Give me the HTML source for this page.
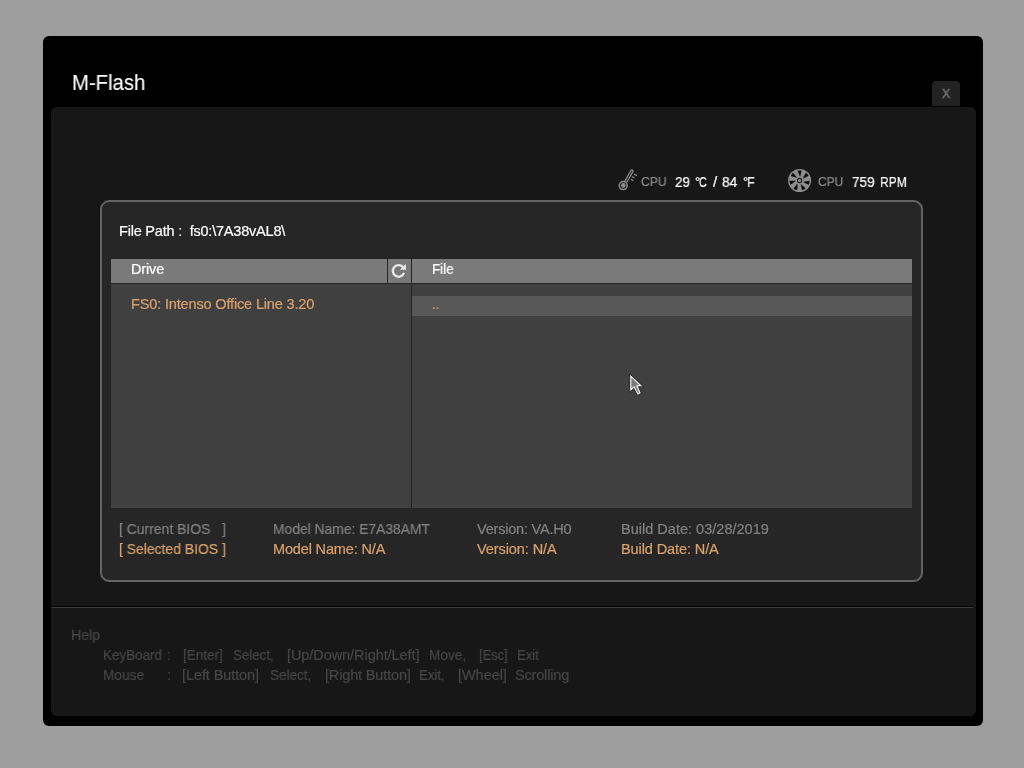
<!DOCTYPE html>
<html><head><meta charset="utf-8"><style>
html,body{margin:0;padding:0;}
body{width:1024px;height:768px;background:#9e9e9e;position:relative;overflow:hidden;font-family:"Liberation Sans", sans-serif;}
.a{position:absolute;}
.t{position:absolute;white-space:pre;will-change:transform;-webkit-text-stroke:0.2px currentColor;}
</style></head><body>
<div class="a" style="left:43px;top:36px;width:940px;height:690px;background:#000;border-radius:6px;"></div>
<div class="a" style="left:51px;top:107px;width:925px;height:609px;background:#171717;border-radius:6px;"></div>
<div class="a" style="left:932px;top:81px;width:28px;height:25px;background:#222222;border-radius:4px 4px 0 0;"></div>
<svg class="a" style="left:0;top:0;" width="1024" height="768"><path d="M109,201 L914,201 L917.6,201.8 L921.2,205.4 L922,209 L922,573 L921.2,576.6 L917.6,580.2 L914,581 L109,581 L105.4,580.2 L101.8,576.6 L101,573 L101,209 L101.8,205.4 L105.4,201.8 Z" fill="#262626" stroke="#646464" stroke-width="2"/></svg>
<div class="a" style="left:111px;top:259px;width:276px;height:24px;background:#7a7a7a;"></div>
<div class="a" style="left:388px;top:259px;width:23px;height:24px;background:#787878;"></div>
<div class="a" style="left:412px;top:259px;width:500px;height:24px;background:#7a7a7a;"></div>
<div class="a" style="left:111px;top:284px;width:300px;height:224px;background:#404040;"></div>
<div class="a" style="left:412px;top:284px;width:500px;height:224px;background:#404040;"></div>
<div class="a" style="left:412px;top:296px;width:500px;height:20px;background:#585858;"></div>
<div class="a" style="left:51px;top:606px;width:922px;height:1px;background:#000;"></div>
<div class="a" style="left:51px;top:607px;width:922px;height:1px;background:#3c3c3c;"></div>
<div class="t" style="left:71.80px;top:72.50px;font-size:21.5px;line-height:21.5px;color:#ffffff;transform:scaleX(0.9433);transform-origin:0.00px 0;-webkit-text-stroke:0.1px #fff;">M-Flash</div>
<div class="t" style="left:941.60px;top:87.10px;font-size:13px;line-height:13px;color:#6c6c6c;transform:scaleX(0.9425);transform-origin:0.00px 0;-webkit-text-stroke:0.6px currentColor;">X</div>
<div class="t" style="left:640.60px;top:176.22px;font-size:12.5px;line-height:12.5px;color:#8e8e8e;transform:scaleX(0.9735);transform-origin:0.00px 0;">CPU</div>
<div class="t" style="left:675.10px;top:173.60px;font-size:15px;line-height:15px;color:#ffffff;transform:scaleX(0.8982);transform-origin:0.00px 0;">29</div>
<div class="t" style="left:695.20px;top:174.60px;font-size:13px;line-height:13px;color:#ffffff;">°</div>
<div class="t" style="left:699.30px;top:173.78px;font-size:15.5px;line-height:15.5px;color:#ffffff;transform:scaleX(0.6964);transform-origin:0.00px 0;">C</div>
<div class="t" style="left:712.80px;top:173.60px;font-size:15px;line-height:15px;color:#ffffff;">/</div>
<div class="t" style="left:722.30px;top:173.60px;font-size:15px;line-height:15px;color:#ffffff;transform:scaleX(0.9162);transform-origin:0.00px 0;">84</div>
<div class="t" style="left:742.80px;top:174.60px;font-size:13px;line-height:13px;color:#ffffff;">°</div>
<div class="t" style="left:746.90px;top:173.78px;font-size:15.5px;line-height:15.5px;color:#ffffff;transform:scaleX(0.8211);transform-origin:0.00px 0;">F</div>
<div class="t" style="left:817.80px;top:176.22px;font-size:12.5px;line-height:12.5px;color:#8e8e8e;transform:scaleX(0.9583);transform-origin:0.00px 0;">CPU</div>
<div class="t" style="left:852.40px;top:174.40px;font-size:15px;line-height:15px;color:#ffffff;transform:scaleX(0.9040);transform-origin:0.00px 0;">759</div>
<div class="t" style="left:880.40px;top:174.40px;font-size:15px;line-height:15px;color:#ffffff;transform:scaleX(0.8048);transform-origin:0.00px 0;">RPM</div>
<div class="t" style="left:118.60px;top:223.73px;font-size:14.5px;line-height:14.5px;color:#ffffff;letter-spacing:-0.208px;">File&#160;Path&#160;:&#160;&#160;fs0:\7A38vAL8\</div>
<div class="t" style="left:130.60px;top:261.73px;font-size:14.5px;line-height:14.5px;color:#ffffff;letter-spacing:-0.150px;">Drive</div>
<div class="t" style="left:432.40px;top:261.73px;font-size:14.5px;line-height:14.5px;color:#ffffff;transform:scaleX(0.9316);transform-origin:0.00px 0;">File</div>
<div class="t" style="left:130.80px;top:297.03px;font-size:14.5px;line-height:14.5px;color:#d9a26c;letter-spacing:-0.150px;">FS0:&#160;Intenso&#160;Office&#160;Line&#160;3.20</div>
<div class="t" style="left:431.70px;top:297.03px;font-size:14.5px;line-height:14.5px;color:#d9a26c;transform:scaleX(0.9259);transform-origin:0.00px 0;">..</div>
<div class="t" style="left:119.20px;top:521.73px;font-size:14.5px;line-height:14.5px;color:#828282;transform:scaleX(0.9604);transform-origin:0.00px 0;">[&#160;Current&#160;BIOS&#160;&#160;&#160;]</div>
<div class="t" style="left:119.20px;top:541.73px;font-size:14.5px;line-height:14.5px;color:#d9a26c;transform:scaleX(0.9604);transform-origin:0.00px 0;">[&#160;Selected&#160;BIOS&#160;]</div>
<div class="t" style="left:273.40px;top:521.73px;font-size:14.5px;line-height:14.5px;color:#828282;transform:scaleX(0.9544);transform-origin:0.00px 0;">Model&#160;Name:&#160;E7A38AMT</div>
<div class="t" style="left:273.40px;top:541.73px;font-size:14.5px;line-height:14.5px;color:#d9a26c;letter-spacing:-0.150px;">Model&#160;Name:&#160;N/A</div>
<div class="t" style="left:476.70px;top:521.73px;font-size:14.5px;line-height:14.5px;color:#828282;letter-spacing:-0.200px;">Version:&#160;VA.H0</div>
<div class="t" style="left:476.70px;top:541.73px;font-size:14.5px;line-height:14.5px;color:#d9a26c;letter-spacing:-0.082px;">Version:&#160;N/A</div>
<div class="t" style="left:621.40px;top:521.73px;font-size:14.5px;line-height:14.5px;color:#828282;letter-spacing:0.014px;">Build&#160;Date:&#160;03/28/2019</div>
<div class="t" style="left:621.40px;top:541.73px;font-size:14.5px;line-height:14.5px;color:#d9a26c;letter-spacing:-0.100px;">Build&#160;Date:&#160;N/A</div>
<div class="t" style="left:70.60px;top:628.23px;font-size:14.5px;line-height:14.5px;color:#474747;transform:scaleX(0.9732);transform-origin:0.00px 0;">Help</div>
<div class="t" style="left:103.40px;top:647.73px;font-size:14.5px;line-height:14.5px;color:#474747;transform:scaleX(0.9262);transform-origin:0.00px 0;">KeyBoard</div>
<div class="t" style="left:167.30px;top:647.73px;font-size:14.5px;line-height:14.5px;color:#474747;">:</div>
<div class="t" style="left:182.70px;top:647.73px;font-size:14.5px;line-height:14.5px;color:#474747;transform:scaleX(0.9321);transform-origin:0.00px 0;">[Enter]</div>
<div class="t" style="left:232.70px;top:647.73px;font-size:14.5px;line-height:14.5px;color:#474747;transform:scaleX(0.9165);transform-origin:0.00px 0;">Select,</div>
<div class="t" style="left:287.30px;top:647.73px;font-size:14.5px;line-height:14.5px;color:#474747;letter-spacing:-0.068px;">[Up/Down/Right/Left]</div>
<div class="t" style="left:428.80px;top:647.73px;font-size:14.5px;line-height:14.5px;color:#474747;transform:scaleX(0.9418);transform-origin:0.00px 0;">Move,</div>
<div class="t" style="left:479.20px;top:647.73px;font-size:14.5px;line-height:14.5px;color:#474747;transform:scaleX(0.8851);transform-origin:0.00px 0;">[Esc]</div>
<div class="t" style="left:516.70px;top:647.73px;font-size:14.5px;line-height:14.5px;color:#474747;transform:scaleX(0.8967);transform-origin:0.00px 0;">Exit</div>
<div class="t" style="left:103.00px;top:668.23px;font-size:14.5px;line-height:14.5px;color:#474747;transform:scaleX(0.9425);transform-origin:0.00px 0;">Mouse</div>
<div class="t" style="left:166.70px;top:668.23px;font-size:14.5px;line-height:14.5px;color:#474747;">:</div>
<div class="t" style="left:182.10px;top:668.23px;font-size:14.5px;line-height:14.5px;color:#474747;letter-spacing:-0.092px;">[Left&#160;Button]</div>
<div class="t" style="left:269.50px;top:668.23px;font-size:14.5px;line-height:14.5px;color:#474747;transform:scaleX(0.9323);transform-origin:0.00px 0;">Select,</div>
<div class="t" style="left:324.50px;top:668.23px;font-size:14.5px;line-height:14.5px;color:#474747;letter-spacing:-0.154px;">[Right&#160;Button]</div>
<div class="t" style="left:419.20px;top:668.23px;font-size:14.5px;line-height:14.5px;color:#474747;transform:scaleX(0.9043);transform-origin:0.00px 0;">Exit,</div>
<div class="t" style="left:458.10px;top:668.23px;font-size:14.5px;line-height:14.5px;color:#474747;letter-spacing:-0.050px;">[Wheel]</div>
<div class="t" style="left:515.30px;top:668.23px;font-size:14.5px;line-height:14.5px;color:#474747;letter-spacing:-0.175px;">Scrolling</div>
<svg class="a" style="left:0;top:0;" width="1024" height="768" viewBox="0 0 1024 768"><circle cx="799.6" cy="180.5" r="11.5" fill="#8c8c8c"/><path d="M803.03,181.89 Q805.94,183.46 808.92,184.65 A10,10 0 0 0 809.50,180.67 Q805.88,181.05 803.03,181.89Z M800.66,184.05 Q801.24,187.30 802.17,190.37 A10,10 0 0 0 805.64,188.35 Q803.08,185.75 800.66,184.05Z M797.49,183.54 Q795.30,186.03 793.48,188.66 A10,10 0 0 0 797.23,190.11 Q797.67,186.50 797.49,183.54Z M795.91,180.74 Q792.60,180.59 789.40,180.81 A10,10 0 0 0 790.61,184.64 Q793.71,182.73 795.91,180.74Z M797.11,177.76 Q795.17,175.08 793.00,172.72 A10,10 0 0 0 790.76,176.05 Q794.18,177.28 797.11,177.76Z M800.19,176.85 Q801.07,173.66 801.57,170.49 A10,10 0 0 0 797.57,170.81 Q798.74,174.26 800.19,176.85Z M802.82,178.68 Q805.87,177.38 808.65,175.80 A10,10 0 0 0 805.91,172.87 Q803.94,175.94 802.82,178.68Z" fill="#0c0c0c"/><circle cx="799.6" cy="180.5" r="2.1" fill="none" stroke="#1a1a1a" stroke-width="1.1"/><path d="M404.00,272.87 A5.75,5.75 0 1 1 403.31,267.60" fill="none" stroke="#e6e6e6" stroke-width="2.4"/><path d="M399.9,269.7 L406,269.7 L405.8,263.8 Z" fill="#e6e6e6"/><g fill="none" stroke="#8c8c8c" stroke-width="1.4" stroke-linecap="round"><circle cx="623.2" cy="185.6" r="4.0" stroke-width="1.5"/><path d="M625.00,180.83 L630.90,170.53 A1.15,1.15 0 0 1 632.90,171.67 L627.00,181.97" stroke-width="1.3"/><path d="M634.6,174.4 l2.0,1.15 M632.4,176.7 l1.7,1.0 M631.3,179.5 l1.7,1.0" stroke-width="1.2"/></g><circle cx="623.3" cy="185.4" r="2.4" fill="#8c8c8c"/><path d="M630.8,376.2 L630.8,390.0 L634.0,386.8 L637.9,393.9 L640.0,392.8 L636.9,385.8 L641.0,385.8 Z" fill="none" stroke="#262626" stroke-width="2.6" stroke-linejoin="miter"/><path d="M630.8,376.2 L630.8,390.0 L634.0,386.8 L637.9,393.9 L640.0,392.8 L636.9,385.8 L641.0,385.8 Z" fill="#7a7a7a" stroke="#ffffff" stroke-width="1.1" stroke-linejoin="miter"/></svg>
</body></html>
